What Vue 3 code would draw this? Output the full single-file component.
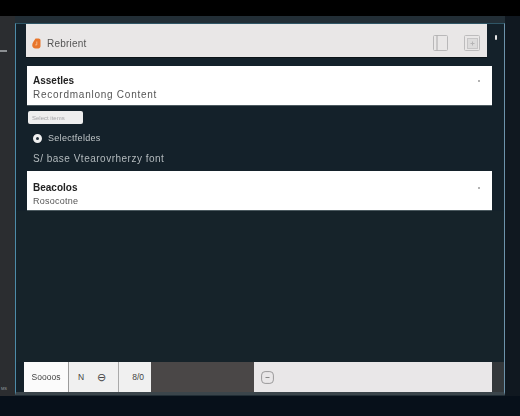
<script setup>
const cards = [
  { title: 'Assetles', sub: 'Recordmanlong Content' },
  { title: 'Beacolos', sub: 'Rosocotne' }
]
</script>

<template>
  <div class="screen">
    <div class="blackbar"></div>
    <div class="desk">
      <aside class="rail">
        <span class="rail-tick"></span>
        <span class="rail-note">MS</span>
      </aside>
      <main class="window">
        <header class="toolbar-row">
          <div class="toolbar">
            <svg class="logo" width="9" height="11" viewBox="0 0 9 11">
              <path d="M3.5.5h3.2c1 0 1.8.8 1.8 1.8v6c0 1.200-1 2.200-2.200 2.200H3.500C1.600 10.500.2 9.100.2 7.300c0-1.300.4-2.400 1.200-3.500z" fill="#e8762c"/>
              <path d="M4.800 3.500v3.400H3.200" fill="none" stroke="#f8c9a0" stroke-width=".8"/>
            </svg>
            <span class="brand">Rebrient</span>
            <span class="spacer"></span>
            <svg class="tool first" width="15" height="16" viewBox="0 0 15 16">
              <rect x=".5" y=".5" width="14" height="15" rx="1" fill="none" stroke="#b9b8b9"/>
              <path d="M4 .5v15" stroke="#a9a8a9"/>
            </svg>
            <svg class="tool" width="16" height="16" viewBox="0 0 16 16">
              <rect x=".5" y=".5" width="15" height="15" rx="1" fill="none" stroke="#bdbcbd"/>
              <rect x="3.500" y="3.500" width="10" height="10" fill="#dcdbdb" stroke="#c6c5c6"/>
              <path d="M8.500 6.500v4M6.500 8.500h4" stroke="#b5b4b5"/>
            </svg>
          </div>
          <span class="grip"></span>
        </header>

        <section class="card first-card">
          <div>
            <div class="card-title">{{ cards[0].title }}</div>
            <div class="card-sub">{{ cards[0].sub }}</div>
          </div>
          <span class="dot"></span>
        </section>

        <div class="input"><span>Select items</span></div>

        <label class="radio-row">
          <span class="radio"></span>
          <span>Selectfeldes</span>
        </label>

        <div class="line">S/ base Vtearovrherzy font</div>

        <section class="card second-card">
          <div>
            <div class="card-title">{{ cards[1].title }}</div>
            <div class="card-sub">{{ cards[1].sub }}</div>
          </div>
          <span class="dot"></span>
        </section>

        <div class="fill"></div>

        <footer class="bottom">
          <div class="seg seg-a">Soooos</div>
          <div class="seg seg-b"><span>N</span><span class="round">⊖</span></div>
          <div class="seg seg-c">8/0</div>
          <div class="gap"></div>
          <div class="seg-d">
            <svg width="13" height="13" viewBox="0 0 13 13">
              <rect x=".6" y=".6" width="11.800" height="11.800" rx="3.500" fill="none" stroke="#9a999a" stroke-width="1"/>
              <path d="M4.500 6.500h4" stroke="#888" stroke-width="1"/>
            </svg>
          </div>
          <div class="tail"></div>
        </footer>
      </main>
      <div class="right-rail"></div>
    </div>
    <div class="floor"></div>
  </div>
</template>

<style scoped>
.screen {
  width: 520px;
  height: 416px;
  overflow: hidden;
  display: flex;
  flex-direction: column;
  background: #000;
  font-family: "Liberation Sans", sans-serif;
}
.blackbar { height: 16px; background: #000; flex: none; }
.desk { display: flex; height: 380px; flex: none; background: #222e36; }
.rail {
  width: 15px;
  flex: none;
  background: #2b2d30;
  display: flex;
  flex-direction: column;
  padding-top: 34px;
  box-sizing: border-box;
}
.rail-tick { width: 7px; height: 2px; background: #8b8f92; }
.rail-note { margin-top: auto; margin-bottom: 5px; font-size: 4px; color: #9aa0a4; padding-left: 1px; }
.window {
  width: 490px;
  flex: none;
  margin-top: 7px;
  box-sizing: border-box;
  border-left: 1px solid #4d8ba8;
  border-right: 1px solid #6d93ab;
  border-top: 1px solid #2f5666;
  border-bottom: 3px solid #3b454b;
  background: #14212a;
  display: flex;
  flex-direction: column;
  height: 372px;
}
.toolbar-row { display: flex; align-items: flex-start; flex: none; }
.toolbar {
  margin-left: 10px;
  width: 461px;
  height: 34px;
  background: #e9e7e7;
  border-bottom: 1px solid #0c1418;
  box-sizing: border-box;
  display: flex;
  align-items: center;
  padding-left: 6px;
}
.logo { margin-right: 6px; margin-top: 5px; }
.brand { font-size: 10px; color: #555; letter-spacing: .2px; margin-top: 5px; filter: blur(.35px); }
.spacer { flex: 1; }
.tool { margin-top: 4px; }
.tool.first { margin-right: 16px; }
.tool:last-child { margin-right: 7px; }
.grip { width: 2px; height: 5px; background: #e6e6e6; border-radius: 1px; margin: 11px 0 0 8px; }
.card {
  margin-left: 11px;
  width: 465px;
  height: 40px;
  box-sizing: border-box;
  background: #fff;
  padding: 9px 12px 0 6px;
  display: flex;
  justify-content: space-between;
  flex: none;
  border-bottom: 1px solid #4c5a60;
}
.first-card { margin-top: 8px; }
.second-card { margin-top: 7px; padding-top: 11px; }
.card-title { font-size: 10px; font-weight: 700; color: #222; line-height: 12px; filter: blur(.35px); }
.card-sub { font-size: 10px; color: #555; line-height: 11px; margin-top: 2px; letter-spacing: .75px; filter: blur(.35px); }
.second-card .card-sub { font-size: 9px; letter-spacing: .25px; }
.dot { width: 2px; height: 2px; border-radius: 50%; background: #9a9a9a; margin-top: 5px; }
.input {
  margin: 5px 0 0 12px;
  width: 55px;
  height: 13px;
  flex: none;
  background: #eeeeee;
  border-radius: 2px;
  box-sizing: border-box;
  padding-left: 4px;
  display: flex;
  align-items: center;
  font-size: 6px;
  color: #a5a5a8;
  filter: blur(.4px);
}
.radio-row {
  margin: 8px 0 0 17px;
  height: 12px;
  flex: none;
  display: flex;
  align-items: center;
  gap: 6px;
  color: #c0c6c8;
  font-size: 9px;
  letter-spacing: .3px;
}
.radio-row span:last-child { filter: blur(.35px); }
.radio {
  width: 9px;
  height: 9px;
  border-radius: 50%;
  box-sizing: border-box;
  border: 3px solid #f0f0f0;
  background: #26323a;
}
.line {
  margin: 9px 0 0 17px;
  height: 11px;
  flex: none;
  line-height: 11px;
  color: #b3babd;
  font-size: 10px;
  letter-spacing: .5px;
  filter: blur(.35px);
}
.fill { flex: 1; background: #16232a; }
.bottom {
  height: 30px;
  margin-left: 8px;
  flex: none;
  display: flex;
  align-items: stretch;
}
.seg {
  display: flex;
  align-items: center;
  font-size: 8.500px;
  color: #444;
  box-sizing: border-box;
}
.seg-a { width: 45px; background: #fbfbfb; justify-content: center; border-right: 1px solid #9b9b9b; filter: blur(.25px); }
.seg-b { width: 50px; background: #f0f0f0; justify-content: space-between; padding: 0 12px 0 9px; border-right: 1px solid #a9a9a9; }
.round { font-size: 11px; }
.seg-c { width: 32px; background: #f0f0f0; justify-content: flex-end; padding-right: 7px; }
.gap { width: 103px; background: #4a4747; }
.seg-d { width: 238px; background: #e9e7e8; display: flex; align-items: center; padding-left: 7px; box-sizing: border-box; }
.tail { flex: 1; background: #34383b; }
.right-rail { flex: 1; background: #101820; }
.floor { flex: 1; background: #07101a; }
</style>

<style>
body { background: #000; }
</style>
